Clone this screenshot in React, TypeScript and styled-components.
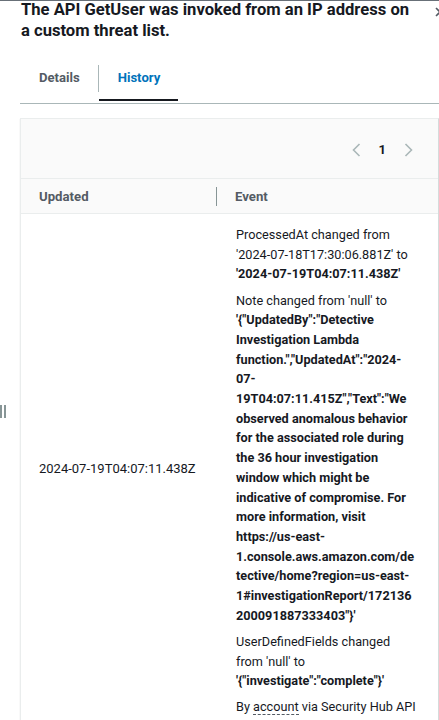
import React from "react";
import styled, { createGlobalStyle } from "styled-components";

const Global = createGlobalStyle`
  html, body { margin: 0; padding: 0; background: #ffffff; }
  body {
    font-family: Roboto, "Noto Sans", "Liberation Sans", Arial, sans-serif;
    color: #16191f;
    overflow: hidden;
    width: 439px;
    height: 720px;
  }
`;

const Page = styled.div`
  position: relative;
  width: 439px;
  height: 720px;
  overflow: hidden;
  border-top: 1px solid #687078;
  box-sizing: border-box;
`;

const Content = styled.div`
  padding-left: 20px;
  display: flex;
  flex-direction: column;
`;

const HeaderRow = styled.div`
  display: flex;
  justify-content: space-between;
  align-items: flex-start;
  height: 40px;
`;

const Title = styled.h2`
  margin: -1px 0 0 1px;
  font-size: 16.6px;
  line-height: 20.5px;
  font-weight: 700;
  color: #16191f;
  width: 398px;
`;

const Close = styled.svg`
  margin-top: 6px;
  margin-right: -6px;
  flex: none;
`;

const Tabs = styled.div`
  display: flex;
  align-items: stretch;
  margin-top: 16px;
  border-bottom: 1px solid #aab7b8;
  height: 47px;
  box-sizing: border-box;
  padding-bottom: 2px;
`;

const Tab = styled.div<{ $active?: boolean }>`
  position: relative;
  display: flex;
  align-items: center;
  padding: 0 18px 4px 19px;
  font-size: 13.1px;
  font-weight: 700;
  color: ${(p) => (p.$active ? "#0073bb" : "#545b64")};
  ${(p) =>
    p.$active &&
    `
    &::after {
      content: "";
      position: absolute;
      left: 0;
      right: 0;
      bottom: 0;
      height: 2px;
      background: #16191f;
    }
  `}
`;

const TabDivider = styled.div`
  width: 1px;
  background: #aab7b8;
  margin: 8px 0 9px 0;
`;

const Card = styled.div`
  margin-top: 14px;
  border: 1px solid #eaeded;
  border-bottom: none;
  border-right-color: #d5dbdb;
  background: #ffffff;
  box-shadow: 0 1px 1px 0 rgba(0, 28, 36, 0.15);
`;

const CardHeader = styled.div`
  height: 59px;
  background: #fafafa;
  display: flex;
  justify-content: flex-end;
  align-items: center;
  padding-right: 25px;
`;

const Pager = styled.div`
  display: flex;
  align-items: center;
  gap: 18px;
  margin-top: 2px;
`;

const PageNum = styled.span`
  font-size: 13px;
  font-weight: 700;
  color: #16191f;
`;

const Table = styled.div`
  display: grid;
  grid-template-columns: 196px minmax(0, 1fr);
`;

const HeadCell = styled.div<{ $divider?: boolean }>`
  height: 34px;
  background: #fafafa;
  border-top: 1px solid #eaeded;
  border-bottom: 1px solid #eaeded;
  display: flex;
  align-items: center;
  padding-left: 18px;
  font-size: 13.2px;
  font-weight: 700;
  color: #545b64;
  position: relative;
  ${(p) =>
    p.$divider &&
    `
    &::after {
      content: "";
      position: absolute;
      right: 0;
      top: 8px;
      bottom: 7px;
      width: 1px;
      background: #879596;
    }
  `}
`;

const DateCell = styled.div`
  display: flex;
  align-items: center;
  padding-left: 18px;
  font-size: 13px;
  color: #16191f;
`;

const EventCell = styled.div`
  padding: 11px 21px 0 19px;
  font-size: 12.7px;
  line-height: 19.7px;
  color: #16191f;
  overflow-wrap: break-word;
  min-width: 0;
`;

const Para = styled.p`
  margin: 0 0 6.4px 0;
`;

const Strong = styled.b`
  font-weight: 700;
`;

const Dotted = styled.span`
  border-bottom: 1px dashed #545b64;
`;

const Handle = styled.div`
  position: absolute;
  left: 0;
  top: 404px;
  display: flex;
  gap: 2px;
`;

const HandleBar = styled.div`
  width: 2px;
  height: 13px;
  background: #879596;
`;

const Chevron = ({ dir }: { dir: "left" | "right" }) => (
  <svg width="9" height="14" viewBox="0 0 9 14" fill="none">
    <path
      d={dir === "left" ? "M7.5 1 L1.5 7 L7.5 13" : "M1.5 1 L7.5 7 L1.5 13"}
      stroke="#aab7b8"
      strokeWidth="1.6"
    />
  </svg>
);

const WJ = "\u2060";
const ZW = "\u200b";

export default function App() {
  return (
    <Page>
      <Global />
      <Content>
        <HeaderRow>
          <Title>The API GetUser was invoked from an IP address on a custom threat list.</Title>
          <Close width="10" height="10" viewBox="0 0 10 10">
            <path d="M1 1 L9 9 M9 1 L1 9" stroke="#545b64" strokeWidth="1.6" />
          </Close>
        </HeaderRow>
        <Tabs>
          <Tab>Details</Tab>
          <TabDivider />
          <Tab $active>History</Tab>
        </Tabs>
        <Card>
          <CardHeader>
            <Pager>
              <Chevron dir="left" />
              <PageNum>1</PageNum>
              <Chevron dir="right" />
            </Pager>
          </CardHeader>
          <Table>
            <HeadCell $divider>Updated</HeadCell>
            <HeadCell>Event</HeadCell>
            <DateCell>2024-07-19T04:07:11.438Z</DateCell>
            <EventCell>
              <Para>
                ProcessedAt changed from '2024-07-18T17:30:06.881Z' to{" "}
                <Strong>'2024-07-19T04:07:11.438Z'</Strong>
              </Para>
              <Para>
                Note changed from 'null' to{" "}
                <Strong>
                  {`'{"UpdatedBy":"Detective Investigation Lambda function.","UpdatedAt":"2024-07-19T04:07:11.415Z","Text":"We observed anomalous behavior for the associated role during the 36 hour investigation window which might be indicative of compromise. For more information, visit https://${WJ}us-east-${ZW}1.console.aws.amazon.com/${WJ}detective/${WJ}home?region=us-east-${ZW}1#investigationReport/${WJ}172136200091887333403"}'`}
                </Strong>
              </Para>
              <Para>
                UserDefinedFields changed from 'null' to{" "}
                <Strong>'{"{"}"investigate":"complete"{"}"}'</Strong>
              </Para>
              <Para>
                By <Dotted>account</Dotted> via Security Hub API
              </Para>
            </EventCell>
          </Table>
        </Card>
      </Content>
      <Handle>
        <HandleBar />
        <HandleBar />
      </Handle>
    </Page>
  );
}
